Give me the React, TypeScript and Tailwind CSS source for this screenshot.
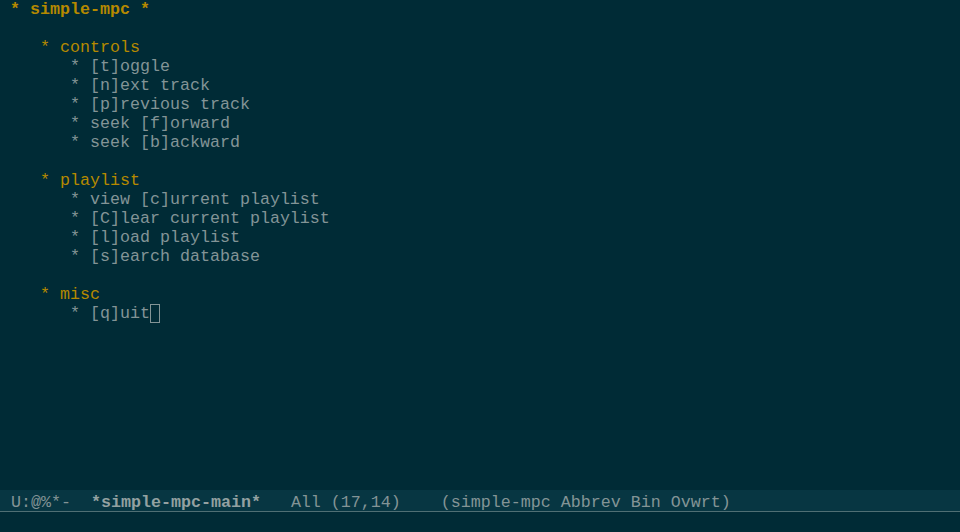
import React from 'react'

const lines: { text: string; kind: 'title' | 'head' | 'item' | 'blank' }[] = [
  { text: '* simple-mpc *', kind: 'title' },
  { text: '', kind: 'blank' },
  { text: '   * controls', kind: 'head' },
  { text: '      * [t]oggle', kind: 'item' },
  { text: '      * [n]ext track', kind: 'item' },
  { text: '      * [p]revious track', kind: 'item' },
  { text: '      * seek [f]orward', kind: 'item' },
  { text: '      * seek [b]ackward', kind: 'item' },
  { text: '', kind: 'blank' },
  { text: '   * playlist', kind: 'head' },
  { text: '      * view [c]urrent playlist', kind: 'item' },
  { text: '      * [C]lear current playlist', kind: 'item' },
  { text: '      * [l]oad playlist', kind: 'item' },
  { text: '      * [s]earch database', kind: 'item' },
  { text: '', kind: 'blank' },
  { text: '   * misc', kind: 'head' },
]

export default function App() {
  return (
    <div
      className="w-[960px] h-[532px] bg-[#002b36] text-[#839496] flex flex-col overflow-hidden text-[16.67px] leading-[19px]"
      style={{ fontFamily: '"Liberation Mono", "DejaVu Sans Mono", monospace' }}
    >
      {/* buffer */}
      <div className="flex-1 pl-[10px] whitespace-pre">
        {lines.map((l, i) => (
          <div
            key={i}
            className={
              l.kind === 'title'
                ? 'h-[19px] text-[#b58900] font-bold'
                : l.kind === 'head'
                  ? 'h-[19px] text-[#b58900]'
                  : 'h-[19px]'
            }
          >
            {l.text}
          </div>
        ))}
        <div className="h-[19px] flex">
          <span>{'      * [q]uit'}</span>
          <span className="inline-block w-[10px] h-[19px] border border-[#839496]" />
        </div>
      </div>

      {/* mode line */}
      <div className="h-[22px] bg-[#073642] border-b border-[#4f6f74] pl-[11px] pt-[3px] whitespace-pre leading-[19px] text-[#839496]">
        <span>{'U:@%*-  '}</span>
        <span className="font-bold text-[#93a1a1]">*simple-mpc-main*</span>
        <span>{'   All (17,14)    (simple-mpc Abbrev Bin Ovwrt)'}</span>
      </div>

      {/* minibuffer */}
      <div className="h-[20px]" />
    </div>
  )
}
